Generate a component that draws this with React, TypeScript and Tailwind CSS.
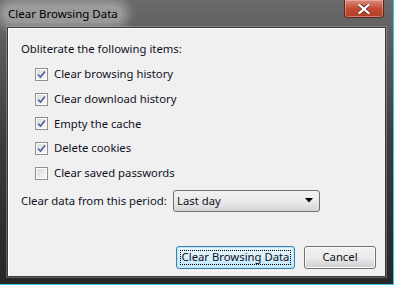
const items = [
  { label: "Clear browsing history", checked: true },
  { label: "Clear download history", checked: true },
  { label: "Empty the cache", checked: true },
  { label: "Delete cookies", checked: true },
  { label: "Clear saved passwords", checked: false },
];

const Checkbox = ({ checked }: { checked: boolean }) => (
  <div className="w-[13px] h-[13px] border border-[#8e8f8f] bg-white p-[1px] shrink-0">
    <div className="w-full h-full bg-gradient-to-br from-[#dcdcdc] to-[#f8f8f8] flex items-center justify-center">
      {checked && (
        <svg width="9" height="9" viewBox="0 0 9 9">
          <path d="M1 4.5 L3.5 7 L8 1.5" fill="none" stroke="#4b5fa6" strokeWidth="1.6" />
        </svg>
      )}
    </div>
  </div>
);

export default function App() {
  return (
    <div
      className="w-[394px] h-[285px] flex flex-col bg-gradient-to-b from-[#6b6b6b] via-[#3c3c3c] to-[#262626] border-r border-b border-r-[#35c8e6] border-b-[#35c8e6] text-[11.3px] text-[#10101e] overflow-hidden whitespace-nowrap"
      style={{ fontFamily: '"Segoe UI", "Noto Sans", "Liberation Sans", sans-serif' }}
    >
      {/* title bar */}
      <div className="h-[27px] flex items-start justify-between shrink-0">
        <div className="ml-[3px] mt-[5px] px-[5px] h-[18px] flex items-center rounded-full bg-[#d9d9d9]/45 shadow-[0_0_8px_6px_rgba(220,220,220,0.4)]">
          <span className="text-[11.5px] text-black leading-none">Clear Browsing Data</span>
        </div>
        <div className="mr-[9px] w-[40px] h-[18px] rounded-b-[4px] border border-t-0 border-[#5a2a22] bg-gradient-to-b from-[#d98e7e] via-[#c24a33] to-[#b23d27] shadow-[inset_0_0_0_1px_rgba(255,200,190,0.45)] flex items-center justify-center">
          <svg width="12" height="10" viewBox="0 0 12 10">
            <path d="M1.5 1 L10.5 9 M10.5 1 L1.5 9" stroke="#5a2a22" strokeWidth="3.6" strokeLinecap="square" />
            <path d="M1.5 1 L10.5 9 M10.5 1 L1.5 9" stroke="#ffffff" strokeWidth="2.2" strokeLinecap="square" />
          </svg>
        </div>
      </div>

      <div className="flex-1 flex px-[7px] pb-[7px]">
        {/* client area */}
        <div className="flex-1 flex flex-col bg-[#f0f0f0] border border-[#3a3a3a] shadow-[inset_1px_1px_0_#ffffff,0_0_0_1px_rgba(200,200,200,0.35)] pl-[13px] pr-[9px]">
          <div className="mt-[13px] h-[17px] flex items-center">Obliterate the following items:</div>
          <div className="mt-[4px] flex flex-col">
            {items.map((it) => (
              <div key={it.label} className="h-[24.8px] flex items-center pl-[14px] gap-[6px]">
                <Checkbox checked={it.checked} />
                <span>{it.label}</span>
              </div>
            ))}
          </div>
          <div className="mt-[4px] flex items-center h-[22px]">
            <span className="w-[152px]">Clear data from this period:</span>
            <div className="w-[147px] h-[22px] rounded-[3px] border border-[#707070] bg-gradient-to-b from-[#f2f2f2] via-[#ebebeb] to-[#d6d6d6] flex items-center justify-between pl-[3px] pr-[6px]">
              <span>Last day</span>
              <svg width="8" height="5" viewBox="0 0 8 5">
                <path d="M0 0 L8 0 L4 4.5 Z" fill="#000" />
              </svg>
            </div>
          </div>
          <div className="flex-1" />
          <div className="flex justify-end gap-[9px] mb-[7px]">
            <div className="w-[119px] h-[23px] rounded-[3px] border border-[#3c7fb1] bg-gradient-to-b from-[#eaf6fd] via-[#d9f0fc] to-[#bee6fd] shadow-[inset_0_0_0_1px_#b9e6fb] p-[3px]">
              <div className="w-full h-full border border-dotted border-black flex items-center justify-center">
                Clear Browsing Data
              </div>
            </div>
            <div className="w-[72px] h-[23px] rounded-[3px] border border-[#707070] bg-gradient-to-b from-[#f2f2f2] via-[#ebebeb] to-[#cfcfcf] shadow-[inset_0_0_0_1px_#fcfcfc] flex items-center justify-center">
              Cancel
            </div>
          </div>
        </div>
      </div>
    </div>
  );
}
